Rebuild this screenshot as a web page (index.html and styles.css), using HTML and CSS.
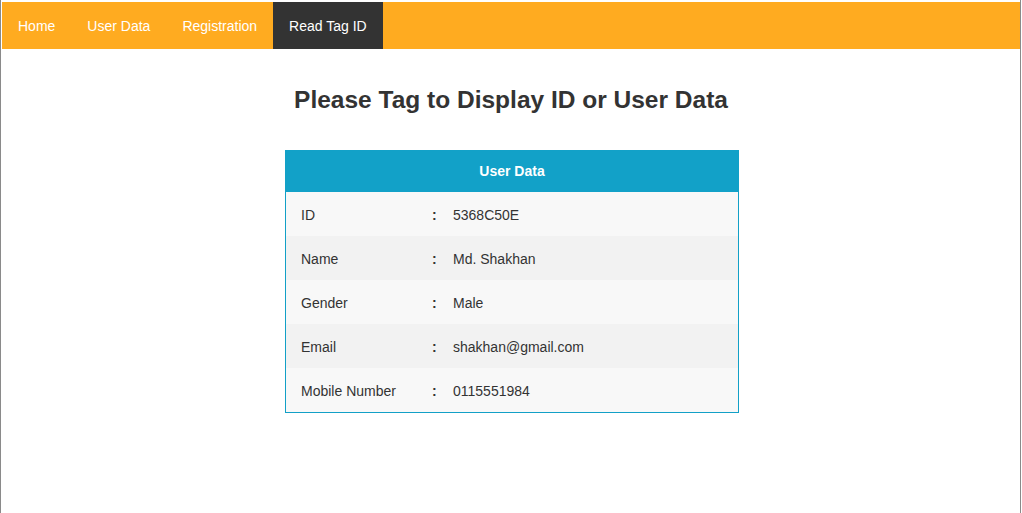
FILE: index.html
```html
<!DOCTYPE html>
<html>
<head>
<meta charset="utf-8">
<link rel="stylesheet" href="styles.css">
</head>
<body>
<div class="page">
  <nav class="topnav">
    <a class="nav-item">Home</a>
    <a class="nav-item">User Data</a>
    <a class="nav-item">Registration</a>
    <a class="nav-item active">Read Tag ID</a>
  </nav>
  <h2 class="title">Please Tag to Display ID or User Data</h2>
  <div class="card">
    <div class="card-head">User Data</div>
    <div class="row odd"><span class="label">ID</span><span class="colon">:</span><span class="value">5368C50E</span></div>
    <div class="row even"><span class="label">Name</span><span class="colon">:</span><span class="value">Md. Shakhan</span></div>
    <div class="row odd"><span class="label">Gender</span><span class="colon">:</span><span class="value">Male</span></div>
    <div class="row even"><span class="label">Email</span><span class="colon">:</span><span class="value">shakhan@gmail.com</span></div>
    <div class="row odd"><span class="label">Mobile Number</span><span class="colon">:</span><span class="value">0115551984</span></div>
  </div>
</div>
</body>
</html>
```
FILE: styles.css
```css
html, body {
  margin: 0;
  padding: 0;
  background: #fff;
}
body {
  font-family: "Liberation Sans", Arial, sans-serif;
  color: #333;
}
.page {
  height: 511px;
  margin-right: 1px;
  border-left: 1px solid #8a8a8a;
  border-right: 1px solid #8a8a8a;
  padding: 2px 0 0 1px;
}
.topnav {
  display: flex;
  background: #ffab20;
  height: 47px;
}
.nav-item {
  display: flex;
  align-items: center;
  padding: 0 16px;
  font-size: 14px;
  color: #fff;
  text-decoration: none;
}
.nav-item.active {
  background: #333333;
}
.title {
  margin: 37px 0 0 0;
  font-size: 24.5px;
  line-height: 28px;
  font-weight: bold;
  text-align: center;
  color: #333;
}
.card {
  width: 452px;
  margin: 36px auto 0;
  border: 1px solid #12a0c7;
  border-top: 0;
  position: relative;
  left: 1px;
}
.card-head {
  background: #12a1c8;
  color: #fff;
  font-weight: bold;
  font-size: 14px;
  height: 42px;
  display: flex;
  align-items: center;
  justify-content: center;
}
.row {
  display: flex;
  align-items: center;
  height: 44px;
  padding-top: 1px;
  box-sizing: border-box;
  font-size: 14px;
  color: #333;
}
.row.odd { background: #f8f8f8; }
.row.even { background: #f2f2f2; }
.label {
  width: 131px;
  padding-left: 15px;
}
.colon {
  width: 21px;
  font-weight: bold;
}
```
